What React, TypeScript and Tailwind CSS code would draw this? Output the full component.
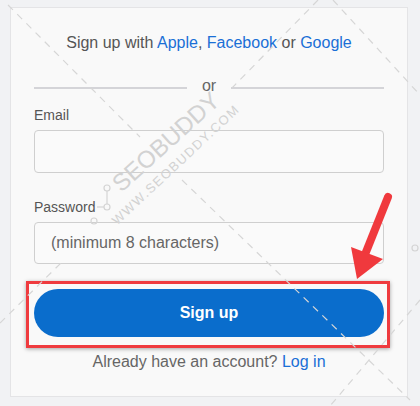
import React from 'react';

const font = { fontFamily: '"Liberation Sans", Arial, sans-serif' };

// red callout arrow pointing at the sign-up button
const Arrow = () => (
  <svg className="absolute left-0 top-0 pointer-events-none" width="420" height="406" viewBox="0 0 420 406">
    <line x1="388" y1="197" x2="366" y2="252" stroke="#f0393d" strokeWidth="8" strokeLinecap="round" />
    <polygon points="351,247 383,259 357,279" fill="#f0393d" />
  </svg>
);

// faint watermark lines + logo nodes
const Watermark = () => (
  <svg className="absolute left-0 top-0 pointer-events-none" width="420" height="406" viewBox="0 0 420 406">
    <g stroke="#d6d6d6" strokeWidth="1.2" strokeDasharray="7 6" fill="none">
      <line x1="8" y1="5" x2="140" y2="137" />
      <line x1="182" y1="180" x2="410" y2="400" />
      <line x1="318" y1="0" x2="232" y2="88" />
      <line x1="333" y1="0" x2="420" y2="95" />
      <line x1="0" y1="323" x2="62" y2="262" />
      <line x1="420" y1="300" x2="330" y2="406" />
    </g>
    <g stroke="#d4d4d4" strokeWidth="1.2" fill="none">
      <circle cx="107" cy="188" r="3" />
      <circle cx="107" cy="207" r="3" />
      <line x1="107" y1="191" x2="107" y2="204" />
      <line x1="97" y1="207" x2="104" y2="207" />
      <circle cx="94" cy="221" r="3" />
      <circle cx="415" cy="248" r="3" />
    </g>
  </svg>
);

export default function App() {
  return (
    <div className="relative w-[420px] h-[406px] bg-[#f1f2f4] pt-[7px] pl-[10px] overflow-hidden" style={font}>
      <div className="w-[398px] h-[390px] border border-[#e4e4e6] bg-[#f9f9f9] px-[23px] pt-[26px]">
        {/* social sign up */}
        <p className="text-[16px] leading-[18px] text-center text-[#555]">
          Sign up with <span className="text-[#1a6fd6]">Apple</span>, <span className="text-[#1a6fd6]">Facebook</span> or{' '}
          <span className="text-[#1a6fd6]">Google</span>
        </p>

        {/* divider */}
        <div className="flex items-start mt-[24px] h-[18px]">
          <div className="flex-1 h-[2px] bg-[#d4d4d8] mt-[11px]"></div>
          <span className="px-[15px] pt-[1px] text-[16px] leading-[18px] text-[#666]">or</span>
          <div className="flex-1 h-[2px] bg-[#d4d4d8] mt-[11px]"></div>
        </div>

        {/* email */}
        <label className="block mt-[13px] text-[14px] leading-[16px] text-[#555]">Email</label>
        <div className="mt-[7px] h-[43px] rounded-[4px] border border-[#cfcfcf] bg-[#fafafa]"></div>

        {/* password */}
        <label className="block mt-[26px] text-[14px] leading-[16px] text-[#555]">Password</label>
        <div className="mt-[7px] h-[42px] rounded-[4px] border border-[#cfcfcf] bg-[#fafafa] flex items-center pl-[16px]">
          <span className="text-[16px] text-[#666]">(minimum 8 characters)</span>
        </div>

        {/* highlighted button */}
        <div className="mt-[17px] -ml-[8px] -mr-[6px] border-[3px] border-[#ef3b3f] pl-[5px] pr-[3px] pt-[5px] pb-[8px] shadow-[0_1px_4px_rgba(0,0,0,0.35)]">
          <button className="w-full h-[48px] rounded-full bg-[#0a6dcc] text-white text-[16px] font-bold">Sign up</button>
        </div>

        <p className="mt-[5px] text-center text-[16px] leading-[18px] text-[#666]">
          Already have an account? <span className="text-[#1a6fd6]">Log in</span>
        </p>
      </div>

      <Watermark />
      <div className="absolute left-[166px] top-[142px] -translate-x-1/2 -translate-y-1/2 -rotate-[42deg] whitespace-nowrap text-[24px] leading-[26px] text-[#d2d2d2] pointer-events-none">
        SEOBUDDY
      </div>
      <div className="absolute left-[176px] top-[165px] -translate-x-1/2 -translate-y-1/2 -rotate-[43deg] whitespace-nowrap text-[13px] leading-[14px] tracking-[1.5px] text-[#d2d2d2] pointer-events-none">
        WWW.SEOBUDDY.COM
      </div>
      <Arrow />
    </div>
  );
}
